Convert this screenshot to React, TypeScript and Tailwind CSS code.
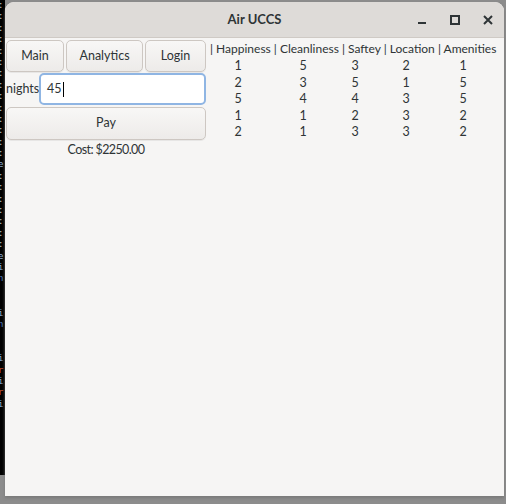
import React from "react";

const rows = [
  [1, 5, 3, 2, 1],
  [2, 3, 5, 1, 5],
  [5, 4, 4, 3, 5],
  [1, 1, 2, 3, 2],
  [2, 1, 3, 3, 2],
];

const termSeq = "::::::::::::::e:::::::ein  in  iriri";

function termColor(ch: string) {
  if (ch === ":") return "text-[#c8c8c8]";
  if (ch === "e" || ch === "i") return "text-[#8fb0d8]";
  if (ch === "n") return "text-[#4f7fc0]";
  if (ch === "r") return "text-[#c05030]";
  return "";
}

function Btn({ children, className = "" }: { children: React.ReactNode; className?: string }) {
  return (
    <div
      className={
        "flex items-center justify-center rounded-[5px] border border-[#cdc7c2] bg-gradient-to-b from-[#f8f7f6] to-[#edebe9] text-[#2e3436] shadow-[0_1px_0_rgba(0,0,0,0.06)] " +
        className
      }
    >
      {children}
    </div>
  );
}

export default function App() {
  return (
    <div
      className="relative flex h-[504px] w-[506px] overflow-hidden bg-[#8c8c8c]"
      style={{ fontFamily: 'Lato, "Noto Sans", sans-serif' }}
    >
      {/* terminal strip behind the window */}
      <div className="flex h-[475px] w-[5px] shrink-0 flex-col overflow-hidden bg-black font-['DejaVu_Sans_Mono',monospace] text-[9px] leading-[11.4px]">
        {termSeq.split("").map((ch, i) => (
          <span key={i} className={"-ml-[2px] block h-[11.4px] overflow-hidden " + termColor(ch)}>
            {ch === " " ? "\u00a0" : ch}
          </span>
        ))}
      </div>

      {/* window */}
      <div className="mt-[2px] flex h-[494px] w-[499px] shrink-0 flex-col overflow-hidden rounded-t-[9px] bg-[#f6f5f4] shadow-[0_2px_3px_rgba(120,120,120,0.9)]">
        {/* title bar */}
        <div className="relative flex h-[36px] shrink-0 items-center justify-center border-b border-[#cfcac5] bg-[#dedbd8]">
          <span className="mt-[1px] text-[13px] font-bold text-[#2e3436]">Air UCCS</span>
          <div className="absolute right-[10px] top-0 flex h-full items-center gap-[21px] text-[#2e3436]">
            <svg width="12" height="12" viewBox="0 0 12 12">
              <rect x="2" y="8" width="8" height="2" fill="#2e3436" />
            </svg>
            <svg width="12" height="12" viewBox="0 0 12 12">
              <rect x="2" y="2" width="8" height="8" fill="none" stroke="#2e3436" strokeWidth="2" />
            </svg>
            <svg width="12" height="12" viewBox="0 0 12 12">
              <path d="M2 2 L10 10 M10 2 L2 10" stroke="#2e3436" strokeWidth="2" />
            </svg>
          </div>
        </div>

        {/* content */}
        <div className="flex text-[12.5px] text-[#2e3436]">
          {/* left panel */}
          <div className="flex w-[201px] shrink-0 flex-col pt-[2px] pl-[1px]">
            <div className="flex gap-[2px]">
              <Btn className="h-[32px] w-[60px]">Main</Btn>
              <Btn className="h-[32px] w-[80px]">Analytics</Btn>
              <Btn className="h-[32px] w-[63px]">Login</Btn>
            </div>
            <div className="mt-[1px] flex items-center">
              <span className="w-[33px] shrink-0 whitespace-nowrap leading-none">nights</span>
              <div className="flex h-[32px] w-[167px] items-center rounded-[5px] border-2 border-[#8fb5e3] bg-white pl-[6px]">
                <span>45</span>
                <span className="ml-[1px] h-[15px] w-[1px] bg-black" />
              </div>
            </div>
            <Btn className="mt-[2px] h-[33px] w-[200px]">Pay</Btn>
            <div className="mt-[2px] w-[200px] text-center leading-[16px] tracking-[-0.6px]">Cost: $2250.00</div>
          </div>

          {/* right panel */}
          <div className="ml-[4px] flex flex-col pt-[3px]">
            <div className="whitespace-nowrap text-[12px] leading-[15px]">
              | Happiness | Cleanliness | Saftey | Location | Amenities
            </div>
            <div className="mt-[2px] grid grid-cols-[56px_74px_30px_72px_42px]">
              {rows.map((r, i) =>
                r.map((v, j) => (
                  <div key={i + "-" + j} className="h-[16.6px] text-center leading-[16.6px]">
                    {v}
                  </div>
                ))
              )}
            </div>
          </div>
        </div>
      </div>
    </div>
  );
}
